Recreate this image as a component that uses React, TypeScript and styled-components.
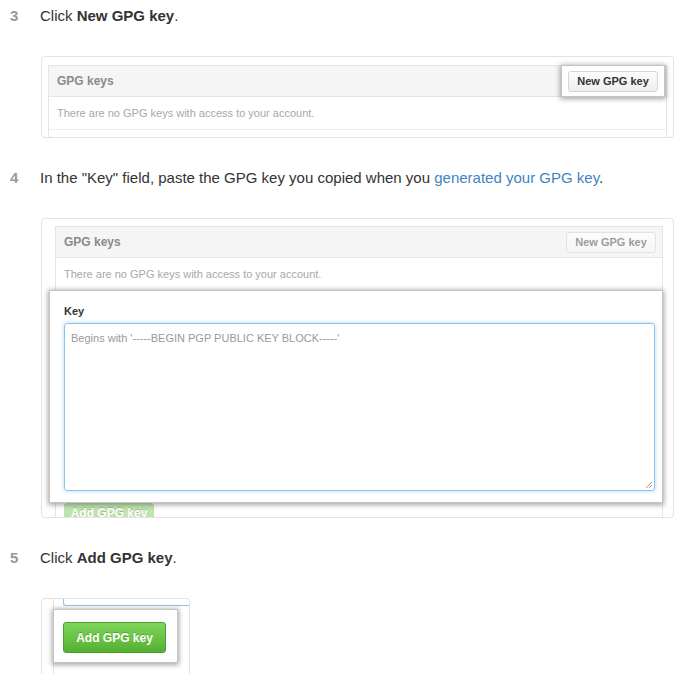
import React from 'react';
import styled, { createGlobalStyle } from 'styled-components';

const GlobalStyle = createGlobalStyle`
  body {
    margin: 0;
    background: #fff;
    font-family: 'Liberation Sans', Helvetica, Arial, sans-serif;
    color: #333;
  }
`;

const Page = styled.div`
  width: 687px;
  height: 674px;
  padding-top: 4px;
  box-sizing: border-box;
  overflow: hidden;
`;

const Step = styled.div`
  display: flex;
  align-items: baseline;
  height: 24px;
  line-height: 24px;
  font-size: 15px;
`;

const StepNumber = styled.span`
  width: 40px;
  padding-left: 10px;
  box-sizing: border-box;
  color: #999;
  font-weight: bold;
`;

const StepText = styled.span`
  color: #333;

  b {
    font-weight: bold;
  }
`;

const Link = styled.a`
  color: #4183c4;
  text-decoration: none;
`;

const Shot = styled.div<{ $width: number; $height: number; $pad: string }>`
  margin: 28px 0 28px 41px;
  width: ${(p) => p.$width}px;
  height: ${(p) => p.$height}px;
  padding: ${(p) => p.$pad};
  box-sizing: border-box;
  border: 1px solid #e2e2e2;
  border-radius: 4px;
  background: #fff;
  overflow: hidden;

  &:last-child {
    margin-bottom: 0;
  }
`;

const Panel = styled.div<{ $open?: boolean }>`
  border: 1px solid #e5e5e5;
  border-top-width: ${(p) => (p.$open ? 0 : 1)}px;
  border-right-width: ${(p) => (p.$open ? 0 : 1)}px;
  min-height: 400px;
  font-size: 11px;
`;

const PanelHeader = styled.div`
  display: flex;
  align-items: center;
  justify-content: space-between;
  height: 30px;
  padding-left: 8px;
  background: #f5f5f5;
  border-bottom: 1px solid #e5e5e5;
`;

const PanelTitle = styled.span`
  font-size: 12px;
  font-weight: bold;
  color: #8a8a8a;
`;

const PanelRow = styled.div`
  display: flex;
  align-items: center;
  height: 32px;
  padding-left: 8px;
  color: #a8a8a8;
  border-bottom: 1px solid #eee;
`;

const Spotlight = styled.div<{ $pad: string }>`
  background: #fff;
  border: 1px solid #c4c4c4;
  box-shadow: 0 1px 5px 1px rgba(0, 0, 0, 0.35);
  padding: ${(p) => p.$pad};
  position: relative;
  z-index: 1;
`;

const HeaderSpot = styled(Spotlight)`
  align-self: stretch;
  display: flex;
  align-items: center;
  margin: -1px 1px -1px 0;
`;

const PlainButton = styled.div<{ $muted?: boolean }>`
  display: flex;
  align-items: center;
  justify-content: center;
  width: 90px;
  height: 21px;
  box-sizing: border-box;
  margin-right: ${(p) => (p.$muted ? 6 : 0)}px;
  border: 1px solid ${(p) => (p.$muted ? '#e3e3e3' : '#d5d5d5')};
  border-radius: 3px;
  background: linear-gradient(#fcfcfc, ${(p) => (p.$muted ? '#f6f6f6' : '#eee')});
  font-size: 11px;
  font-weight: bold;
  color: ${(p) => (p.$muted ? '#9c9c9c' : '#333')};
`;

const KeyModal = styled(Spotlight)`
  margin: -1px -1px 0 -7px;
  height: 213px;
  box-sizing: border-box;
`;

const FieldLabel = styled.div`
  font-size: 11px;
  font-weight: bold;
  line-height: 14px;
  color: #333;
  margin-bottom: 5px;
`;

const KeyArea = styled.div`
  position: relative;
  height: 168px;
  box-sizing: border-box;
  padding: 6px;
  border: 1px solid #8cc3ee;
  border-radius: 3px;
  box-shadow: 0 0 4px rgba(81, 167, 232, 0.45);
  font-size: 11px;
  line-height: 16px;
  color: #999;
`;

const ResizeGrip = styled.svg`
  position: absolute;
  right: 1px;
  bottom: 1px;
`;

const GreenButton = styled.div<{ $faded?: boolean }>`
  display: flex;
  align-items: ${(p) => (p.$faded ? 'flex-start' : 'center')};
  justify-content: center;
  box-sizing: border-box;
  width: ${(p) => (p.$faded ? 90 : 103)}px;
  height: 31px;
  padding-top: ${(p) => (p.$faded ? 1 : 0)}px;
  margin-left: ${(p) => (p.$faded ? 8 : 0)}px;
  border: 1px solid ${(p) => (p.$faded ? '#bfe3b0' : '#4aa02c')};
  border-radius: 3px;
  background: ${(p) =>
    p.$faded ? '#bfe5ad' : 'linear-gradient(#7fd65b, #54b030)'};
  color: #fff;
  font-size: 12px;
  line-height: 16px;
  font-weight: bold;
  text-shadow: 0 -1px 0 rgba(0, 0, 0, 0.2);
`;

const TextareaEdge = styled.div`
  height: 6px;
  margin-left: 9px;
  border-left: 1px solid #8cc3ee;
  border-bottom: 1px solid #8cc3ee;
  border-bottom-left-radius: 3px;
  margin-bottom: 3px;
`;

const ButtonSpot = styled(Spotlight)`
  width: 125px;
  box-sizing: border-box;
  margin-left: -1px;
`;

export default function App() {
  return (
    <Page>
      <GlobalStyle />

      <Step>
        <StepNumber>3</StepNumber>
        <StepText>
          Click <b>New GPG key</b>.
        </StepText>
      </Step>
      <Shot $width={633} $height={82} $pad="8px 6px 0 6px">
        <Panel>
          <PanelHeader>
            <PanelTitle>GPG keys</PanelTitle>
            <HeaderSpot $pad="0 6px">
              <PlainButton>New GPG key</PlainButton>
            </HeaderSpot>
          </PanelHeader>
          <PanelRow>There are no GPG keys with access to your account.</PanelRow>
          <PanelRow />
        </Panel>
      </Shot>

      <Step>
        <StepNumber>4</StepNumber>
        <StepText>
          In the "Key" field, paste the GPG key you copied when you{' '}
          <Link href="#">generated your GPG key</Link>.
        </StepText>
      </Step>
      <Shot $width={633} $height={300} $pad="7px 10px 0 13px">
        <Panel>
          <PanelHeader>
            <PanelTitle>GPG keys</PanelTitle>
            <PlainButton $muted>New GPG key</PlainButton>
          </PanelHeader>
          <PanelRow>There are no GPG keys with access to your account.</PanelRow>
          <KeyModal $pad="13px 7px 12px 14px">
            <FieldLabel>Key</FieldLabel>
            <KeyArea>
              Begins with '-----BEGIN PGP PUBLIC KEY BLOCK-----'
              <ResizeGrip width="8" height="8" viewBox="0 0 8 8">
                <path d="M7 1 L1 7 M7 4 L4 7" stroke="#999" strokeWidth="1" />
              </ResizeGrip>
            </KeyArea>
          </KeyModal>
          <GreenButton $faded>Add GPG key</GreenButton>
        </Panel>
      </Shot>

      <Step>
        <StepNumber>5</StepNumber>
        <StepText>
          Click <b>Add GPG key</b>.
        </StepText>
      </Step>
      <Shot $width={149} $height={90} $pad="0 0 0 11px">
        <Panel $open>
          <TextareaEdge />
          <ButtonSpot $pad="12px 11px 9px 9px">
            <GreenButton>Add GPG key</GreenButton>
          </ButtonSpot>
        </Panel>
      </Shot>
    </Page>
  );
}
